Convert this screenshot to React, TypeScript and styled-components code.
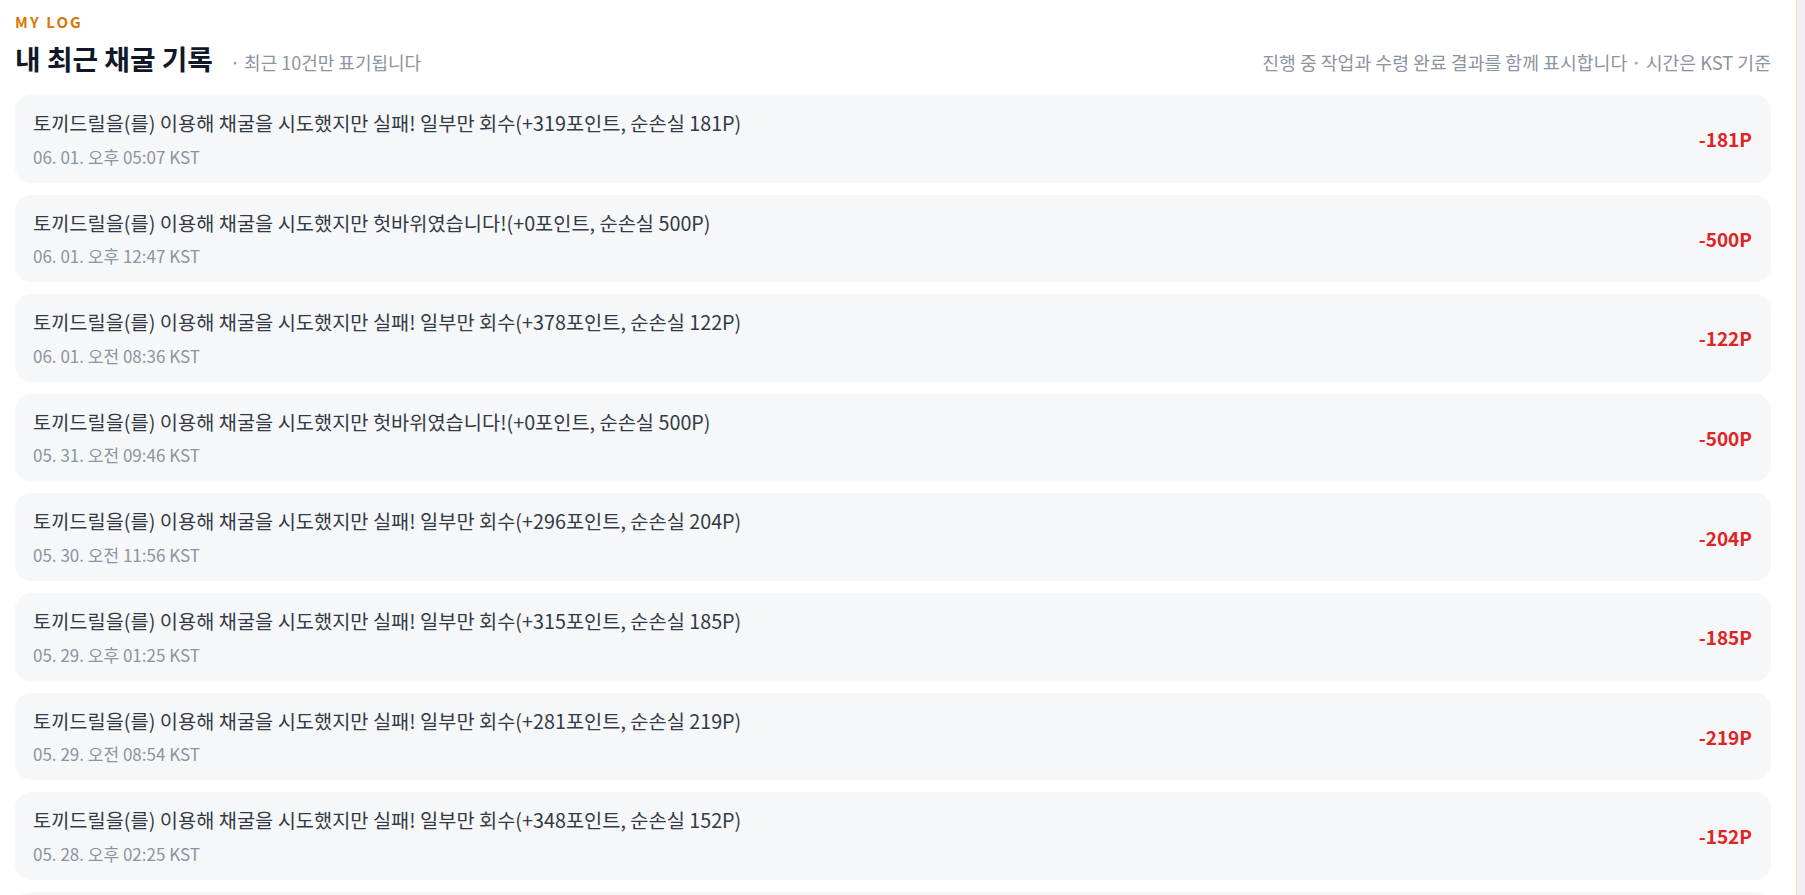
import React from 'react';
import styled, { createGlobalStyle } from 'styled-components';

const GlobalStyle = createGlobalStyle`
    html, body {
        margin: 0;
        padding: 0;
        height: 100%;
        overflow: hidden;
        background: #f1f0f6;
    }
    #root {
        height: 100%;
    }
`;

const Page = styled.div`
    display: flex;
    height: 100%;
    font-family: "Noto Sans CJK KR", "Noto Sans", sans-serif;
`;

const Panel = styled.main`
    flex: 1;
    background: #ffffff;
    border-right: 1px solid #fbe2bd;
    padding: 12px 25px 0 15px;
    overflow: hidden;
`;

const Track = styled.div`
    width: 8px;
    background: #efeef5;
`;

const Eyebrow = styled.div`
    font-size: 15px;
    font-weight: 700;
    letter-spacing: 0.14em;
    color: #d97706;
    line-height: 20px;
`;

const HeaderRow = styled.div`
    display: flex;
    align-items: baseline;
    justify-content: space-between;
    margin-top: 7px;
    margin-bottom: 18px;
`;

const TitleGroup = styled.div`
    display: flex;
    align-items: baseline;
    gap: 17px;
`;

const Heading = styled.h2`
    margin: 0;
    font-size: 27.8px;
    font-weight: 700;
    color: #111827;
    line-height: 38px;
`;

const Muted = styled.span<{ size?: number }>`
    font-size: ${(p) => p.size ?? 18}px;
    color: #8b94a1;
`;

const List = styled.div`
    display: flex;
    flex-direction: column;
    gap: 12px;
`;

const Item = styled.div`
    display: flex;
    align-items: center;
    justify-content: space-between;
    background: #f6f7f9;
    border-radius: 16px;
    padding: 14px 19px 14px 18px;
`;

const Info = styled.div`
    display: flex;
    flex-direction: column;
`;

const Message = styled.div`
    font-size: 19.75px;
    line-height: 28px;
    color: #333a45;
`;

const Time = styled.div`
    margin-top: 7.6px;
    font-size: 17px;
    line-height: 24px;
    color: #8b94a1;
`;

const Amount = styled.div<{ negative: boolean }>`
    font-size: 19px;
    font-weight: 700;
    color: ${(p) => (p.negative ? '#e02424' : '#16a34a')};
`;

type LogRow = { msg: string; time: string; delta: number };

const PREFIX = '토끼드릴을(를) 이용해 채굴을 시도했지만 ';

const partial = (gain: number, loss: number) =>
    `${PREFIX}실패! 일부만 회수(+${gain}포인트, 순손실 ${loss}P)`;
const miss = `${PREFIX}헛바위였습니다!(+0포인트, 순손실 500P)`;

const logs: LogRow[] = [
    { msg: partial(319, 181), time: '06. 01. 오후 05:07 KST', delta: -181 },
    { msg: miss, time: '06. 01. 오후 12:47 KST', delta: -500 },
    { msg: partial(378, 122), time: '06. 01. 오전 08:36 KST', delta: -122 },
    { msg: miss, time: '05. 31. 오전 09:46 KST', delta: -500 },
    { msg: partial(296, 204), time: '05. 30. 오전 11:56 KST', delta: -204 },
    { msg: partial(315, 185), time: '05. 29. 오후 01:25 KST', delta: -185 },
    { msg: partial(281, 219), time: '05. 29. 오전 08:54 KST', delta: -219 },
    { msg: partial(348, 152), time: '05. 28. 오후 02:25 KST', delta: -152 },
    { msg: partial(302, 198), time: '05. 28. 오전 10:12 KST', delta: -198 },
    { msg: miss, time: '05. 27. 오후 09:31 KST', delta: -500 },
];

const App = () => {
    return (
        <>
            <GlobalStyle />
            <Page>
                <Panel>
                    <Eyebrow>MY LOG</Eyebrow>
                    <HeaderRow>
                        <TitleGroup>
                            <Heading>내 최근 채굴 기록</Heading>
                            <Muted>· 최근 10건만 표기됩니다</Muted>
                        </TitleGroup>
                        <Muted size={18.3}>진행 중 작업과 수령 완료 결과를 함께 표시합니다 · 시간은 KST 기준</Muted>
                    </HeaderRow>
                    <List>
                        {logs.map((row, i) => (
                            <Item key={i}>
                                <Info>
                                    <Message>{row.msg}</Message>
                                    <Time>{row.time}</Time>
                                </Info>
                                <Amount negative={row.delta < 0}>
                                    {row.delta < 0 ? '-' : '+'}
                                    {Math.abs(row.delta)}P
                                </Amount>
                            </Item>
                        ))}
                    </List>
                </Panel>
                <Track />
            </Page>
        </>
    );
};

export default App;
